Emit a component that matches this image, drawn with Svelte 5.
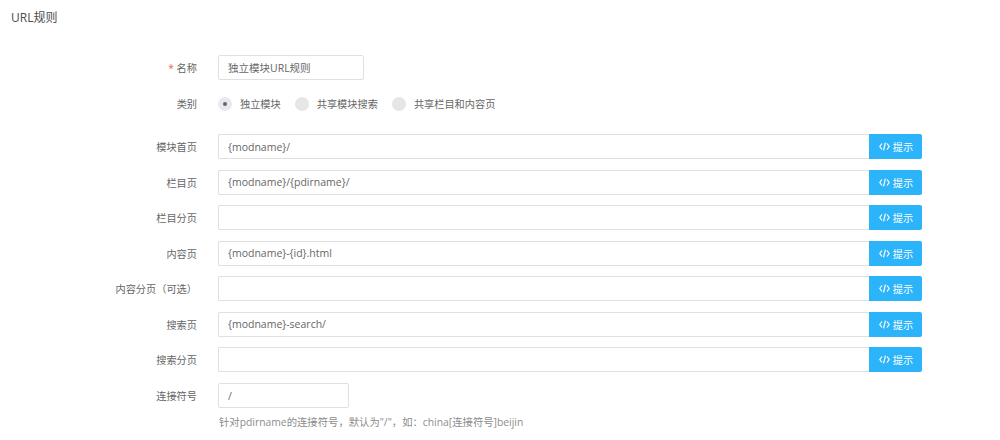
<script>
	const urlRows = [
		{ label: '模块首页', value: '{modname}/' },
		{ label: '栏目页', value: '{modname}/{pdirname}/' },
		{ label: '栏目分页', value: '' },
		{ label: '内容页', value: '{modname}-{id}.html' },
		{ label: '内容分页（可选）', value: '' },
		{ label: '搜索页', value: '{modname}-search/' },
		{ label: '搜索分页', value: '' }
	];
	const types = ['独立模块', '共享模块搜索', '共享栏目和内容页'];
</script>

<div class="page">
	<div class="title">URL规则</div>

	<form class="form">
		<div class="row name-row">
			<span class="label"><i>*</i> 名称</span>
			<input class="input name" value="独立模块URL规则" />
		</div>

		<div class="row type-row">
			<span class="label">类别</span>
			<div class="radios">
				{#each types as t, i}
					<span class="radio">
						<span class="circle" class:on={i === 0}></span>
						{t}
					</span>
				{/each}
			</div>
		</div>

		<div class="url-rows">
			{#each urlRows as row}
				<div class="row">
					<span class="label">{row.label}</span>
					<div class="group">
						<input class="input wide" value={row.value} />
						<button type="button" class="tip">
							<svg width="11" height="9" viewBox="0 0 11 9" fill="none" stroke="currentColor" stroke-width="1.2">
								<path d="M3 1.5 L0.8 4.5 L3 7.5" />
								<path d="M8 1.5 L10.2 4.5 L8 7.5" />
								<path d="M6.4 0.6 L4.6 8.4" />
							</svg>
							提示
						</button>
					</div>
				</div>
			{/each}
		</div>

		<div class="row sep-row">
			<span class="label">连接符号</span>
			<input class="input sep" value="/" />
		</div>
		<div class="help">针对pdirname的连接符号，默认为"/"，如：china[连接符号]beijin</div>
	</form>
</div>

<style>
	:global(body) {
		margin: 0;
		background: #fff;
	}

	.page {
		width: 1000px;
		height: 440px;
		overflow: hidden;
		font-family: "Open Sans", "Noto Sans CJK SC", sans-serif;
		font-size: 10.2px;
		color: #666;
	}

	.title {
		padding: 10px 0 0 11px;
		height: 55px;
		box-sizing: border-box;
		font-size: 12px;
		line-height: 16px;
		color: #4c4c4c;
	}

	.form {
		padding-right: 78px;
	}

	.row {
		display: flex;
		align-items: center;
		height: 25px;
	}

	.label {
		width: 197px;
		flex-shrink: 0;
		margin-right: 21px;
		text-align: right;
		white-space: nowrap;
	}

	.label i {
		color: #e4644f;
		font-style: normal;
	}

	.input {
		height: 25px;
		box-sizing: border-box;
		border: 1px solid #e0e0e0;
		border-radius: 2px;
		padding: 0 9px;
		font: inherit;
		font-size: 10.5px;
		color: #666;
		background: #fff;
		outline: none;
	}

	.name {
		width: 146px;
	}

	.sep {
		width: 131px;
	}

	.type-row {
		margin-top: 11px;
		margin-bottom: 18px;
	}

	.radios {
		display: flex;
		gap: 14px;
	}

	.radio {
		display: flex;
		align-items: center;
		gap: 8px;
		white-space: nowrap;
	}

	.circle {
		width: 14px;
		height: 14px;
		border-radius: 50%;
		background: #e6e6e6;
		display: flex;
		align-items: center;
		justify-content: center;
	}

	.circle.on {
		background: #e8e8ee;
	}

	.circle.on::after {
		content: "";
		width: 4px;
		height: 4px;
		border-radius: 50%;
		background: #666;
	}

	.url-rows {
		display: flex;
		flex-direction: column;
		gap: 10.5px;
	}

	.group {
		flex: 1;
		display: flex;
	}

	.wide {
		flex: 1;
		min-width: 0;
		border-right: none;
		border-radius: 2px 0 0 2px;
	}

	.tip {
		width: 53px;
		height: 25px;
		border: none;
		border-radius: 0 2px 2px 0;
		background: #2cb4fb;
		color: #fff;
		font: inherit;
		padding: 0 0 0 1px;
		display: flex;
		align-items: center;
		justify-content: center;
		gap: 3px;
	}

	.sep-row {
		margin-top: 11px;
	}

	.help {
		margin: 7px 0 0 219px;
		font-size: 10.35px;
		line-height: 14px;
		color: #8c8c8c;
	}
</style>
